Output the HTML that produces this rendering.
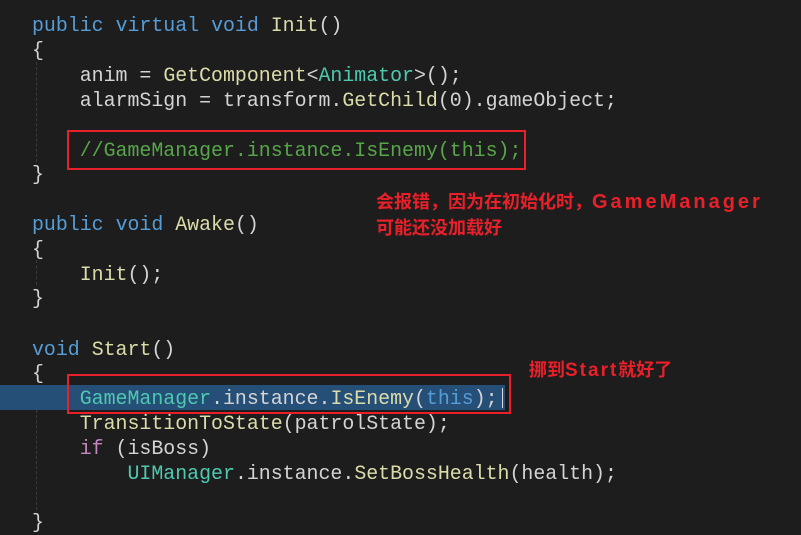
<!DOCTYPE html>
<html><head><meta charset="utf-8"><style>
body{margin:0;width:801px;height:533px;background:#1d1d1d;overflow:hidden;position:relative;font-family:"Liberation Mono","DejaVu Sans Mono",monospace;}
.l{position:absolute;left:32px;font-size:19.9px;line-height:25px;height:25px;white-space:pre;color:#d4d4d4;}
.k{color:#569cd6}.f{color:#dcdcaa}.t{color:#4ec9b0}.c{color:#57a64a}.p{color:#c586c0}
.box{position:absolute;border:2px solid #e8202a;box-sizing:border-box;}
.r{position:absolute;color:#e8202a;font-family:"Noto Sans CJK SC","Liberation Sans",sans-serif;font-weight:bold;font-size:18px;line-height:27px;white-space:nowrap;}
.lat{font-family:"Liberation Sans",sans-serif;font-weight:bold;}
.g{position:absolute;left:36px;width:0;border-left:1px dashed #3a3a3a;}
</style></head><body>
<div class="g" style="top:62px;height:100px"></div>
<div class="g" style="top:260px;height:25px"></div>
<div class="g" style="top:410px;height:100px"></div>
<div style="position:absolute;left:0;top:385px;width:505px;height:25px;background:#264f78"></div>
<div class="l" style="top:13px"><span class="k">public</span> <span class="k">virtual</span> <span class="k">void</span> <span class="f">Init</span>()</div>
<div class="l" style="top:38px">{</div>
<div class="l" style="top:63px">    anim = <span class="f">GetComponent</span>&lt;<span class="t">Animator</span>&gt;();</div>
<div class="l" style="top:88px">    alarmSign = transform.<span class="f">GetChild</span>(0).gameObject;</div>
<div class="l" style="top:138px">    <span class="c">//GameManager.instance.IsEnemy(this);</span></div>
<div class="l" style="top:162px">}</div>
<div class="l" style="top:212px"><span class="k">public</span> <span class="k">void</span> <span class="f">Awake</span>()</div>
<div class="l" style="top:237px">{</div>
<div class="l" style="top:262px">    <span class="f">Init</span>();</div>
<div class="l" style="top:286px">}</div>
<div class="l" style="top:337px"><span class="k">void</span> <span class="f">Start</span>()</div>
<div class="l" style="top:361px">{</div>
<div class="l" style="top:386px">    <span class="t">GameManager</span>.instance.<span class="f">IsEnemy</span>(<span class="k">this</span>);</div>
<div class="l" style="top:411px">    <span class="f">TransitionToState</span>(patrolState);</div>
<div class="l" style="top:436px">    <span class="p">if</span> (isBoss)</div>
<div class="l" style="top:461px">        <span class="t">UIManager</span>.instance.<span class="f">SetBossHealth</span>(health);</div>
<div class="l" style="top:510px">}</div>
<div class="box" style="left:67px;top:130px;width:459px;height:40px"></div>
<div class="box" style="left:67px;top:374px;width:444px;height:40px"></div>
<div style="position:absolute;left:502px;top:388px;width:1px;height:20px;background:#ddd"></div>
<div class="r" style="left:376px;top:188px">会报错，因为在初始化时，<span class="lat" style="font-size:20px;letter-spacing:3px">GameManager</span></div>
<div class="r" style="left:376px;top:214px">可能还没加载好</div>
<div class="r" style="left:529px;top:356px">挪到<span class="lat" style="font-size:19px;letter-spacing:2px">Start</span>就好了</div>
</body></html>
